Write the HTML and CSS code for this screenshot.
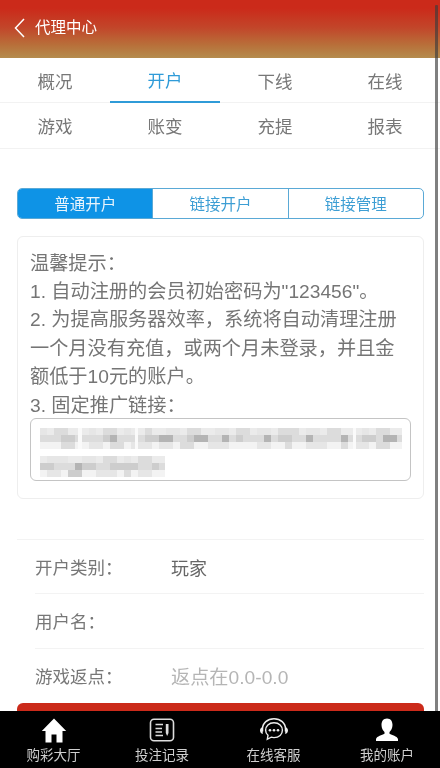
FILE: index.html
```html
<!DOCTYPE html>
<html lang="zh-CN">
<head>
<meta charset="utf-8">
<title>代理中心</title>
<link rel="stylesheet" href="styles.css">
</head>
<body>
<div class="page">
  <header class="topbar">
    <svg class="back" width="12" height="20" viewBox="0 0 12 20"><path d="M10 1 1.500 10 10 19" fill="none" stroke="#fff" stroke-width="1.500"/></svg>
    <span class="title">代理中心</span>
  </header>
  <nav class="tabs">
    <a class="tab">概况</a><a class="tab active">开户</a><a class="tab">下线</a><a class="tab">在线</a>
    <a class="tab">游戏</a><a class="tab">账变</a><a class="tab">充提</a><a class="tab">报表</a>
  </nav>
  <main class="content">
    <div class="segment">
      <a class="seg on">普通开户</a><a class="seg">链接开户</a><a class="seg">链接管理</a>
    </div>
    <section class="notice">
      <p>温馨提示<span class="colon">：</span></p>
      <p>1. 自动注册的会员初始密码为"123456"。</p>
      <p>2. 为提高服务器效率，系统将自动清理注册<br>一个月没有充值，或两个月未登录，并且金<br>额低于10元的账户。</p>
      <p>3. 固定推广链接<span class="colon">：</span></p>
      <div class="linkbox">
        <svg class="mosaic" width="362" height="49" viewBox="0 0 362 49">
          <g class="s1">
            <rect x="0" y="0" width="38" height="7"/><rect x="42" y="0" width="53" height="7"/><rect x="98" y="0" width="218" height="7"/><rect x="316" y="0" width="46" height="7"/>
            <rect x="0" y="28" width="125" height="7"/>
          </g>
          <g class="s0">
            <rect x="0" y="14" width="362" height="7"/><rect x="0" y="42" width="125" height="7"/>
          </g>
          <g class="s2">
            <rect x="0" y="7" width="362" height="7"/><rect x="0" y="35" width="125" height="7"/>
            <rect x="14" y="0" width="14" height="7"/><rect x="63" y="0" width="14" height="7"/><rect x="105" y="0" width="7" height="7"/><rect x="147" y="0" width="14" height="7"/><rect x="196" y="0" width="14" height="7"/><rect x="238" y="0" width="21" height="7"/><rect x="287" y="0" width="14" height="7"/><rect x="336" y="0" width="14" height="7"/>
            <rect x="21" y="14" width="14" height="7"/><rect x="70" y="14" width="14" height="7"/><rect x="140" y="14" width="14" height="7"/><rect x="245" y="14" width="7" height="7"/><rect x="301" y="14" width="7" height="7"/><rect x="336" y="14" width="14" height="7"/>
            <rect x="63" y="28" width="14" height="7"/><rect x="98" y="28" width="14" height="7"/><rect x="28" y="42" width="14" height="7"/><rect x="84" y="42" width="7" height="7"/>
          </g>
          <g class="s6">
            <rect x="49" y="14" width="14" height="7"/><rect x="91" y="14" width="21" height="7"/><rect x="119" y="14" width="14" height="7"/><rect x="168" y="14" width="21" height="7"/><rect x="217" y="14" width="14" height="7"/><rect x="266" y="14" width="21" height="7"/><rect x="315" y="14" width="14" height="7"/>
            <rect x="0" y="0" width="7" height="7"/><rect x="49" y="0" width="7" height="7"/><rect x="84" y="0" width="7" height="7"/><rect x="126" y="0" width="14" height="7"/><rect x="175" y="0" width="14" height="7"/><rect x="217" y="0" width="14" height="7"/><rect x="266" y="0" width="14" height="7"/><rect x="322" y="0" width="7" height="7"/>
            <rect x="7" y="28" width="21" height="7"/><rect x="42" y="28" width="14" height="7"/><rect x="84" y="28" width="7" height="7"/><rect x="7" y="42" width="14" height="7"/><rect x="56" y="42" width="21" height="7"/><rect x="98" y="42" width="14" height="7"/>
          </g>
          <g class="s3">
            <rect x="21" y="7" width="14" height="7"/><rect x="63" y="7" width="14" height="7"/><rect x="105" y="7" width="21" height="7"/><rect x="147" y="7" width="7" height="7"/><rect x="196" y="7" width="7" height="7"/><rect x="238" y="7" width="14" height="7"/><rect x="322" y="7" width="14" height="7"/>
            <rect x="0" y="35" width="14" height="7"/><rect x="42" y="35" width="14" height="7"/><rect x="70" y="35" width="28" height="7"/><rect x="112" y="35" width="7" height="7"/><rect x="28" y="42" width="14" height="7"/>
          </g>
          <g class="s4">
            <rect x="70" y="7" width="7" height="7"/><rect x="119" y="7" width="14" height="7"/><rect x="154" y="7" width="14" height="7"/><rect x="182" y="7" width="7" height="7"/><rect x="224" y="7" width="7" height="7"/><rect x="266" y="7" width="7" height="7"/><rect x="301" y="7" width="7" height="7"/><rect x="343" y="7" width="14" height="7"/>
            <rect x="35" y="35" width="7" height="7"/>
          </g>
          <g class="s5">
            <rect x="38" y="0" width="4" height="21"/><rect x="95" y="0" width="3" height="21"/><rect x="313" y="0" width="3" height="21"/>
          </g>
        </svg>
      </div>
    </section>
    <form class="form">
      <div class="row"><span class="label">开户类别<span class="colon">：</span></span><span class="value">玩家</span></div>
      <div class="row"><span class="label">用户名<span class="colon">：</span></span></div>
      <div class="row"><span class="label">游戏返点<span class="colon">：</span></span><span class="value hint">返点在0.0-0.0</span></div>
      <button class="submit" type="button"></button>
    </form>
  </main>
  <div class="scrollbar"></div>
  <footer class="bottom">
    <a class="item i1">
      <svg width="26" height="26" viewBox="0 0 26 26"><path d="M13 1 0.800 13.500H4.500V25H10.500V17H15.500V25H21.500V13.500H25.200Z" fill="#fff"/></svg>
      <span>购彩大厅</span>
    </a>
    <a class="item i2">
      <svg width="26" height="26" viewBox="0 0 26 26"><rect x="1.500" y="1.800" width="23" height="21.500" rx="3.500" fill="none" stroke="#ddd" stroke-width="1.600"/><path d="M6.500 7H14M6.500 11H13M6.500 14.500H13M6.500 18H14" stroke="#ddd" stroke-width="1.500" fill="none"/><path d="M16.800 6.500H19.500V15.500L18.150 18.500 16.800 15.500Z" fill="#ddd"/></svg>
      <span>投注记录</span>
    </a>
    <a class="item i3">
      <svg width="30" height="26" viewBox="0 0 30 26"><path d="M3.500 14V11.500C3.500 5.500 8.500 1.300 15 1.300S26.500 5.500 26.500 11.500V14" fill="none" stroke="#eee" stroke-width="1.500"/><path d="M3.500 9.500C1.700 10.300 1 11.500 1 13S2 16 3.800 16.500ZM26.500 9.500C28.300 10.300 29 11.500 29 13S28 16 26.200 16.500Z" fill="#eee"/><path d="M15 5.300C9.800 5.300 6.600 8.600 6.600 12.700C6.600 14.900 7.500 16.500 9 17.800L8.300 21.800 12.200 19.700C13.100 20 14 20.100 15 20.100C20.200 20.100 23.400 16.800 23.400 12.700S20.200 5.300 15 5.300Z" fill="none" stroke="#eee" stroke-width="1.400"/><circle cx="11" cy="12.800" r="1.300" fill="#eee"/><circle cx="15" cy="12.800" r="1.300" fill="#eee"/><circle cx="19" cy="12.800" r="1.300" fill="#eee"/></svg>
      <span>在线客服</span>
    </a>
    <a class="item i4">
      <svg width="26" height="26" viewBox="0 0 26 26"><path d="M13 1C9.300 1 7.500 3.800 7.500 7.500C7.500 10.800 9 13.200 10.500 14.500V16.300C8 17.800 3 18.500 2 21.500V23.500H24V21.500C23 18.500 18 17.800 15.500 16.300V14.500C17 13.200 18.500 10.800 18.500 7.500C18.500 3.800 16.700 1 13 1Z" fill="#fff"/></svg>
      <span>我的账户</span>
    </a>
  </footer>
</div>
</body>
</html>
```
FILE: styles.css
```css
* { box-sizing: border-box; }
html, body { margin: 0; padding: 0; background: #fff; }
body { font-family: "Liberation Sans", "Noto Sans CJK SC", sans-serif; }
.page { position: relative; width: 440px; height: 768px; overflow: hidden; background: #fff; filter: blur(0.5px); }
.colon { font-family: "Noto Sans CJK TC", sans-serif; line-height: 0; }

.topbar { height: 58px; padding: 0 0 3px 14px; display: flex; align-items: center; gap: 9px; background: linear-gradient(#cb2a1a 0%, #cb2a1a 14%, #c2462a 48%, #b8703a 78%, #b58c4e 100%); }
.back { flex: none; }
.title { padding-bottom: 4px; color: #fff; font-size: 15.500px; }

.tabs { display: grid; grid-template-columns: repeat(4, 110px); grid-auto-rows: 45px; border-bottom: 1px solid #f2f2f2; }
.tab { display: flex; align-items: center; justify-content: center; font-size: 17.500px; color: #777; border-bottom: 1px solid #f2f2f2; }
.tab:nth-child(n+5) { border-bottom: 0; }
.tab.active { color: #2f9bd8; border-bottom: 2px solid #2f9bd8; }

.content { padding: 39px 16px 0 17px; }

.segment { display: flex; height: 31px; border: 1.500px solid #5aa9d6; border-radius: 5px; overflow: hidden; }
.seg { flex: 1; display: flex; align-items: center; justify-content: center; padding-bottom: 2px; font-size: 15.500px; color: #3d9ed4; border-left: 1.500px solid #5aa9d6; }
.seg:first-child { border-left: 0; }
.seg.on { background: #0e93e6; color: #e8f4fc; }

.notice { margin-top: 17px; height: 263px; padding: 12.500px 12px 0 12px; border: 1px solid #eeeeee; border-radius: 6px; }
.notice p { margin: 0; font-size: 19.200px; line-height: 28.400px; color: #757575; white-space: nowrap; }
.linkbox { margin-top: -2px; height: 63px; padding: 9px 9px; border: 1px solid #c4c4c4; border-radius: 6px; }
.mosaic { display: block; filter: blur(0.7px); }
.s0 { fill: #f3f3f3; }
.s1 { fill: #ebebeb; }
.s2 { fill: #dcdcdc; }
.s3 { fill: #cdcdcd; }
.s4 { fill: #b4b4b4; }
.s5 { fill: #fafafa; }
.s6 { fill: #e6e6e6; }

.form { margin-top: 40px; border-top: 1px solid #f3f3f3; }
.row { height: 54.300px; margin-left: 18px; display: flex; align-items: center; border-bottom: 1px solid #f3f3f3; font-size: 17.500px; }
.row:last-of-type { border-bottom: 0; }
.label { width: 136px; color: #777; }
.value { color: #666; font-size: 18px; }
.value.hint { color: #b5b5b5; font-size: 19.200px; }
.submit { display: block; width: 100%; height: 48px; border: 0; border-radius: 6px 6px 0 0; background: #cb2a1a; }

.scrollbar { position: absolute; left: 435px; top: 5px; width: 2.500px; height: 710px; background: rgba(60, 60, 60, 0.65); border-radius: 1px; }

.bottom { position: absolute; left: 0; right: 0; bottom: 0; height: 57px; display: grid; grid-template-columns: 107px 110px 113px 114px; background: #000; }
.item { display: flex; flex-direction: column; align-items: center; padding-top: 6px; color: #cfcfcf; font-size: 13.500px; line-height: 17px; }
.item svg { display: block; height: 27px; margin-bottom: 3px; }
```
